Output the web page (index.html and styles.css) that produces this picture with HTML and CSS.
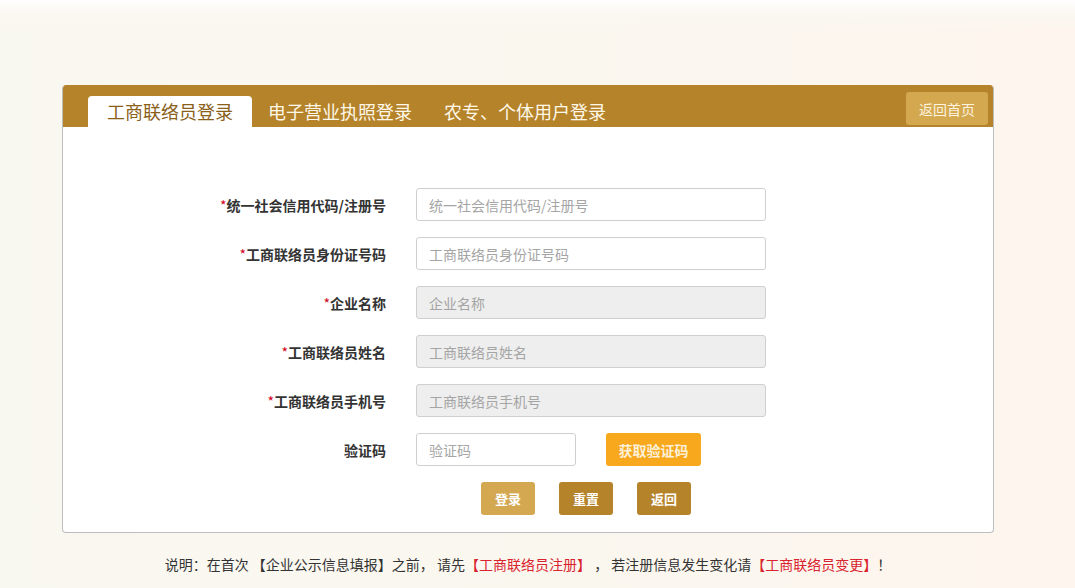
FILE: index.html
```html
<!DOCTYPE html>
<html lang="zh-CN">
<head>
<meta charset="utf-8">
<title>工商联络员登录</title>
<link rel="stylesheet" href="styles.css">
</head>
<body>
<div class="topstrip"></div>
<div class="panel">
  <div class="panel-head">
    <div class="tabs">
      <div class="tab active">工商联络员登录</div>
      <div class="tab">电子营业执照登录</div>
      <div class="tab">农专、个体用户登录</div>
    </div>
    <button class="home-btn">返回首页</button>
  </div>
  <div class="panel-body">
    <div class="form">
      <label class="lbl"><span class="req">*</span>统一社会信用代码/注册号</label>
      <input class="inp" placeholder="统一社会信用代码/注册号">
      <label class="lbl"><span class="req">*</span>工商联络员身份证号码</label>
      <input class="inp" placeholder="工商联络员身份证号码">
      <label class="lbl"><span class="req">*</span>企业名称</label>
      <input class="inp disabled" placeholder="企业名称" disabled>
      <label class="lbl"><span class="req">*</span>工商联络员姓名</label>
      <input class="inp disabled" placeholder="工商联络员姓名" disabled>
      <label class="lbl"><span class="req">*</span>工商联络员手机号</label>
      <input class="inp disabled" placeholder="工商联络员手机号" disabled>
      <label class="lbl">验证码</label>
      <div class="captcha-row">
        <input class="inp short" placeholder="验证码">
        <button class="code-btn">获取验证码</button>
      </div>
      <div class="spacer"></div>
      <div class="actions">
        <button class="act light">登录</button>
        <button class="act">重置</button>
        <button class="act">返回</button>
      </div>
    </div>
  </div>
</div>
<p class="note">说明：在首次 【企业公示信息填报】之前， 请先<span class="red">【工商联络员注册】</span> ， 若注册信息发生变化请<span class="red">【工商联络员变更】</span>！</p>
</body>
</html>
```

FILE: styles.css
```css
* { box-sizing: border-box; }
html, body { margin: 0; padding: 0; }
body {
  width: 1075px;
  height: 588px;
  overflow: hidden;
  background: linear-gradient(90deg, #f9f8f0 0%, #faf7ef 50%, #fdf5ee 100%);
  font-family: "Liberation Sans", "Noto Sans CJK SC", sans-serif;
  color: #333;
}
.topstrip {
  height: 85px;
  background: linear-gradient(180deg, #ffffff 0px, #faf8f1 14px, rgba(250,248,241,0) 30px);
}
.panel {
  margin-left: 62px;
  width: 932px;
  height: 448px;
  background: #fff;
  border: 1px solid #bdbdbd;
  border-top: none;
  border-radius: 4px;
  overflow: hidden;
}
.panel-head {
  height: 42px;
  background: #b5832a;
  display: flex;
  justify-content: space-between;
  align-items: flex-start;
  padding-left: 25px;
  padding-right: 5px;
}
.tabs {
  display: flex;
  align-items: flex-end;
  height: 42px;
}
.tab {
  height: 31px;
  line-height: 31px;
  padding: 0 16px;
  font-size: 18px;
  color: #fff8e8;
  font-family: "Noto Sans CJK SC", sans-serif;
  white-space: nowrap;
}
.tab.active {
  background: #fff;
  color: #8a5f1a;
  padding: 0 19px;
  border-radius: 4px 4px 0 0;
}
.home-btn {
  margin-top: 7px;
  width: 82px;
  height: 33px;
  border: none;
  border-radius: 3px;
  background: #d4a84f;
  color: #fdf3df;
  font-size: 14px;
  font-family: "Noto Sans CJK SC", sans-serif;
  padding: 0;
}
.panel-body {
  padding-top: 61px;
}
.form {
  display: grid;
  grid-template-columns: 323px 350px;
  column-gap: 30px;
  row-gap: 16px;
  align-items: center;
}
.lbl {
  text-align: right;
  font-size: 14px;
  font-weight: bold;
  color: #333;
  font-family: "Noto Sans CJK SC", sans-serif;
}
.req { color: #d0021b; font-weight: normal; }
.inp {
  height: 33px;
  width: 350px;
  border: 1px solid #cfcfcf;
  border-radius: 3px;
  padding: 0 12px;
  font-size: 14px;
  font-family: "Noto Sans CJK SC", sans-serif;
  background: #fff;
  outline: none;
}
.inp::placeholder { color: #a5a5a5; }
.inp.disabled { background: #eeeeee; }
.inp.short { width: 160px; }
.captcha-row {
  display: flex;
  gap: 30px;
  align-items: center;
}
.code-btn {
  width: 95px;
  height: 33px;
  border: none;
  border-radius: 3px;
  background: #f8a81c;
  color: #fdf0d8;
  font-size: 14px;
  font-weight: bold;
  font-family: "Noto Sans CJK SC", sans-serif;
  padding: 0;
}
.actions {
  display: flex;
  gap: 24px;
  padding-left: 65px;
}
.act {
  width: 54px;
  height: 33px;
  border: none;
  border-radius: 3px;
  background: #b5832a;
  color: #fff;
  font-size: 13px;
  font-weight: bold;
  font-family: "Noto Sans CJK SC", sans-serif;
  padding: 0;
}
.act.light { background: #d4a851; }
.note {
  margin: 21px 0 0;
  width: 1056px;
  text-align: center;
  font-size: 14px;
  color: #333;
  font-family: "Noto Sans CJK SC", sans-serif;
}
.red { color: #d9232e; }
```
